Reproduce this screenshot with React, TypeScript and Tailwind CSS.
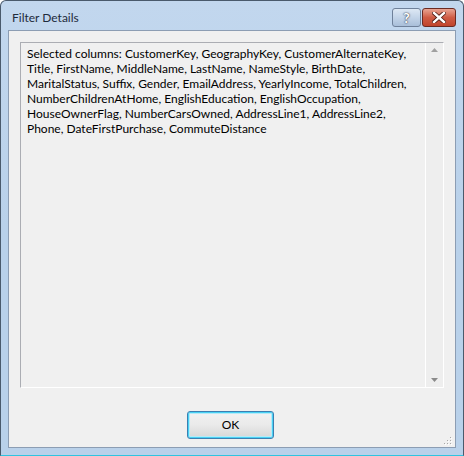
import React from "react";

const LINES = [
  "Selected columns: CustomerKey, GeographyKey, CustomerAlternateKey,",
  "Title, FirstName, MiddleName, LastName, NameStyle, BirthDate,",
  "MaritalStatus, Suffix, Gender, EmailAddress, YearlyIncome, TotalChildren,",
  "NumberChildrenAtHome, EnglishEducation, EnglishOccupation,",
  "HouseOwnerFlag, NumberCarsOwned, AddressLine1, AddressLine2,",
  "Phone, DateFirstPurchase, CommuteDistance",
];

function Grip() {
  const dots = [
    [6, 0],
    [3, 3], [6, 3],
    [0, 6], [3, 6], [6, 6],
  ];
  return (
    <svg width="9" height="9" className="absolute right-[2px] bottom-[1px]">
      {dots.map(([x, y]) => (
        <g key={`${x}-${y}`}>
          <rect x={x + 1} y={y + 1} width="1" height="1" fill="#ffffff" />
          <rect x={x} y={y} width="1" height="1" fill="#a8a8a8" />
        </g>
      ))}
    </svg>
  );
}

export default function App() {
  return (
    <div className="w-[464px] h-[456px] bg-white">
      <div
        className="w-[464px] h-[456px] flex flex-col rounded-t-[6px] border border-[#4a5a6c] border-b-[#2fc4e0] bg-[#b9d1ea] bg-gradient-to-b from-[#c2d7ee] via-[#b9d1ea] to-[#b9d1ea]"
        style={{ fontFamily: '"Segoe UI", "Lato", "Noto Sans", sans-serif' }}
      >
        {/* Title bar */}
        <div className="h-[28px] flex items-center justify-between pl-[11px] pr-[7px]">
          <span className="text-[12px] text-[#1e2b3c] pt-[5px]">Filter Details</span>
          <div className="flex items-start self-start pt-[7px] gap-[1px]">
            <div className="w-[29px] h-[19px] rounded-[3px] border border-[#6f819a] bg-gradient-to-b from-[#dde8f4] via-[#c3d4e8] to-[#a9bfd9] flex items-center justify-center">
              <span className="text-[14px] font-bold leading-none text-white [text-shadow:0_0_1px_#334,0_0_2px_#445]">?</span>
            </div>
            <div className="w-[34px] h-[19px] rounded-[3px] border border-[#6b2a22] bg-gradient-to-b from-[#e8a493] via-[#cf5c45] to-[#c0442c] flex items-center justify-center">
              <svg width="14" height="11" viewBox="0 0 14 11">
                <path d="M2 1 L12 10 M12 1 L2 10" stroke="#4a1a12" strokeWidth="4" strokeLinecap="square" />
                <path d="M2 1 L12 10 M12 1 L2 10" stroke="#ffffff" strokeWidth="2.4" strokeLinecap="square" />
              </svg>
            </div>
          </div>
        </div>

        {/* Client area */}
        <div className="relative mx-[7px] mb-[7px] mt-[1px] flex-1 flex flex-col border border-[#8c9db3] bg-[#f0f0f0] px-[11px] pt-[11px] pb-[8px]">
          <div className="h-[346px] flex border border-[#abadb3] border-r-white border-b-white bg-[#f0f0f0]">
            <div className="flex-1 pl-[6px] pt-[3px] text-[12px] leading-[15px] text-black whitespace-nowrap">
              {LINES.map((l) => (
                <div key={l}>{l}</div>
              ))}
            </div>
            <div className="w-[18px] flex flex-col justify-between items-center border-l border-white bg-[#eeeeee] py-[5px]">
              <svg width="7" height="4" viewBox="0 0 7 4">
                <path d="M3.5 0 L7 4 L0 4 Z" fill="#a0a0a0" />
              </svg>
              <svg width="7" height="4" viewBox="0 0 7 4">
                <path d="M0 0 L7 0 L3.5 4 Z" fill="#8a8a8a" />
              </svg>
            </div>
          </div>
          <div className="flex justify-center mt-[23px] pr-[3px]">
            <div className="w-[87px] h-[28px] rounded-[3px] border border-[#3c7fb1] shadow-[inset_0_0_0_1px_#48d1f4,inset_0_0_0_2px_#b6eaf8] bg-gradient-to-b from-[#f2f2f2] via-[#eaeaea] to-[#d6d6d6] flex items-center justify-center">
              <span className="text-[12px] text-black">OK</span>
            </div>
          </div>
          <Grip />
        </div>
      </div>
    </div>
  );
}
